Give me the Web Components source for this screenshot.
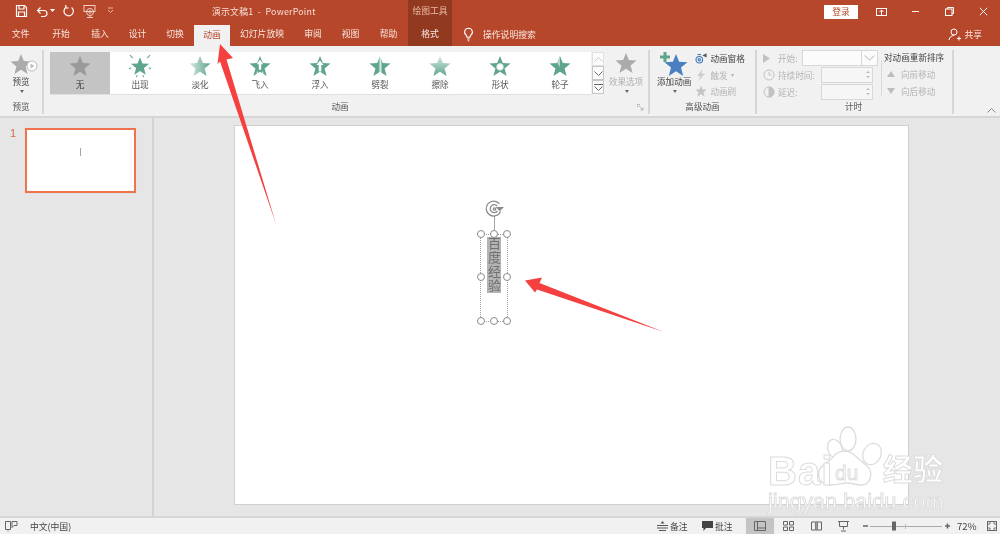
<!DOCTYPE html>
<html lang="zh-CN"><head><meta charset="utf-8"><title>PowerPoint</title>
<style>
html,body{margin:0;padding:0;width:1000px;height:534px;overflow:hidden;background:#e6e6e6}
body{font:8.8px "Noto Sans CJK SC","Liberation Sans",sans-serif;color:#444}
</style></head><body>
<ppt-app>
  <ppt-titlebar></ppt-titlebar>
  <ppt-tabs>
    <ppt-tab w="41">文件</ppt-tab><ppt-tab w="40">开始</ppt-tab><ppt-tab w="38">插入</ppt-tab><ppt-tab w="37">设计</ppt-tab><ppt-tab w="38">切换</ppt-tab>
    <ppt-tab w="36" active>动画</ppt-tab><ppt-tab w="64">幻灯片放映</ppt-tab><ppt-tab w="38">审阅</ppt-tab><ppt-tab w="37">视图</ppt-tab><ppt-tab w="39">帮助</ppt-tab><ppt-tab w="44" ctx>格式</ppt-tab>
  </ppt-tabs>
  <ppt-ribbon></ppt-ribbon>
  <ppt-main></ppt-main>
  <ppt-status></ppt-status>
  <ppt-watermark></ppt-watermark>
  <ppt-arrows></ppt-arrows>
</ppt-app>
<script>
const P="12,1 15.1,8.8 23.5,9.2 17,14.6 19.2,23 12,18.3 4.8,23 7,14.6 .5,9.2 8.9,8.8";
const G="#5fa48d";
function star(kind,s=22){
  let defs="",fill=G,extra="";
  if(kind==="none")fill="#9a9a9a";
  if(kind==="gray")fill="#ababab";
  if(kind==="blue")fill="#4a7fc0";
  if(kind==="fade"){defs=`<linearGradient id="g" x1="0" x2="1" y1="0" y2="0"><stop offset="0" stop-color="#d5e8e1"/><stop offset="1" stop-color="${G}"/></linearGradient>`;fill="url(#g)"}
  if(kind==="split"){defs=`<linearGradient id="g" x1="0" x2="1" y1="0" y2="0"><stop offset="0" stop-color="${G}"/><stop offset=".42" stop-color="${G}"/><stop offset=".52" stop-color="#d8ebe4"/><stop offset=".62" stop-color="${G}"/><stop offset="1" stop-color="${G}"/></linearGradient>`;fill="url(#g)"}
  if(kind==="wipe"){defs=`<linearGradient id="g" x1="0" x2="0" y1="0" y2="1"><stop offset="0" stop-color="#d5e8e1"/><stop offset="1" stop-color="${G}"/></linearGradient>`;fill="url(#g)"}
  if(kind==="appear")extra=`<g stroke="${G}" stroke-width="1.2" fill="none"><path d="M1 0l3 3.500M23 0l-3 3.500M0 15l2.500-1M24 15l-2.500-1M8 24l1-2M16 24l-1-2"/></g>`;
  if(kind==="fly")extra=`<path d="M12 5l-3.500 5h2.200v6h2.600v-6h2.200z" fill="#fff"/><path d="M9 18v4M12 19v4M15 18v4" stroke="#fff" stroke-width="1"/>`;
  if(kind==="float")extra=`<path d="M12 6l-4 5h2.600v7h2.800v-7h2.600z" fill="#fff"/>`;
  if(kind==="shape")extra=`<circle cx="12" cy="13" r="3.600" fill="#fff" stroke="#cfe4dc"/>`;
  if(kind==="wheel")extra=`<path d="M12 13L12 1L8.900 8.800z" fill="#b9d9cd"/>`;
  const t=kind==="appear"?"translate(1.700 1.700) scale(.86)":"";
  return `<svg width="${s}" height="${s}" viewBox="0 0 24 24" style="display:block;overflow:visible"><defs>${defs}</defs><g transform="${t}"><polygon points="${P}" fill="${fill}"/>${kind==="appear"?"":extra}</g>${kind==="appear"?extra:""}</svg>`;
}
function def(name,css,html,init){
  customElements.define(name,class extends HTMLElement{
    connectedCallback(){
      if(this.shadowRoot)return;
      const r=this.attachShadow({mode:"open"});
      r.innerHTML=`<style>${css}</style>`+(typeof html==="function"?html(this):html);
      init&&init(this,r);
    }
  });
}
def("ppt-app",`:host{position:relative;display:grid;grid-template-rows:23px 23px 72px 398px 18px;width:1000px;height:534px;overflow:hidden;filter:blur(.35px)}`,`<slot></slot>`);

const ico=`fill="none" stroke="#fff" stroke-width="1.2"`;
def("ppt-titlebar",`
:host{display:flex;background:#b7472a;color:#f6dfd8;height:23px;align-items:center;font-size:8.8px}
.qat{width:212px;display:flex;align-items:center;position:relative;height:23px;flex:none}
.qat svg{position:absolute;top:4px}
.title{width:196px;flex:none;letter-spacing:.25px;white-space:pre}
.ctx{width:44px;flex:none;height:23px;background:#923a20;color:#ecb9a8;text-align:center;line-height:21px}
.sp{flex:1}
.login{width:34px;height:14px;background:#fff;color:#b7472a;text-align:center;line-height:14px;flex:none;margin-right:6px;font-size:8.8px}
.win{display:flex;align-items:center;flex:none;width:136px}
.win span{width:34px;display:flex;justify-content:center}
`,`<div class="qat">
<svg style="left:15px" width="13" height="14" viewBox="0 0 13 14" ${ico}><path d="M1.500 1.500h8l2 2v9h-10z"/><path d="M4 1.500v3.500h5V1.500M3.500 12.500V8h6v4.500"/></svg>
<svg style="left:36px" width="12" height="14" viewBox="0 0 12 14" ${ico} stroke-width="1.4"><path d="M2 6.500h6a3 3 0 0 1 0 6H5M4.500 3.500L1.500 6.500l3 3"/></svg>
<svg style="left:50px;top:9px" width="5" height="4" viewBox="0 0 5 4"><path d="M0 0h5L2.500 3z" fill="#fff"/></svg>
<svg style="left:62px" width="13" height="14" viewBox="0 0 13 14" ${ico} stroke-width="1.4"><path d="M3.400 3.500a4.700 4.700 0 1 0 5.600-.2M9.200 1v3H6.300" transform="scale(-1 1) translate(-13 0)"/></svg>
<svg style="left:83px" width="14" height="15" viewBox="0 0 14 15" fill="none" stroke="#f0d0c6" stroke-width="1"><rect x="1" y="1.500" width="11" height="6"/><circle cx="7" cy="8" r="3.500"/><circle cx="7" cy="8" r="1.200"/><path d="M4 13.500h6M7 11.500v2"/></svg>
<svg style="left:107px;top:7px" width="7" height="7" viewBox="0 0 7 7" fill="none" stroke="#e8b5a6"><path d="M1 1h5M1 3l2.500 2.500L6 3"/></svg>
</div>
<div class="title">演示文稿1  -  PowerPoint</div>
<div class="ctx">绘图工具</div><div class="sp"></div>
<div class="login">登录</div>
<div class="win">
<span><svg width="11" height="10" viewBox="0 0 11 10" fill="none" stroke="#fff"><rect x=".5" y="1.500" width="10" height="7"/><path d="M5.500 8V3M3.500 5l2-2 2 2" /></svg></span>
<span><svg width="9" height="9" viewBox="0 0 9 9" stroke="#fff"><path d="M1 4.500h7"/></svg></span>
<span><svg width="9" height="9" viewBox="0 0 9 9" fill="none" stroke="#fff"><rect x=".5" y="2" width="6.500" height="6.500"/><path d="M2.500 2V.5h6v6H7"/></svg></span>
<span><svg width="9" height="9" viewBox="0 0 9 9" stroke="#fff"><path d="M.8.8l7.400 7.400M8.200.8L.8 8.200"/></svg></span>
</div>`);

def("ppt-tabs",`
:host{display:flex;background:#b7472a;color:#f8e6e0;height:23px;align-items:flex-end}
.s{display:flex;align-items:center;height:23px;margin-left:11px;gap:9px;flex:1;font-size:8.8px}
.share{display:flex;align-items:center;gap:3px;margin-right:18px;margin-left:auto;font-size:8.8px}
`,`<slot></slot><div class="s"><svg width="11" height="15" viewBox="0 0 11 15" fill="none" stroke="#fff" stroke-width="1.1"><path d="M5.500 1.200a3.900 3.900 0 0 0-2.200 7.100c.5.500.7 1 .7 2h3c0-1 .2-1.500.7-2a3.900 3.900 0 0 0-2.200-7.100zM4.200 12h2.600M4.700 13.800h1.600"/></svg><span>操作说明搜索</span>
<span class="share"><svg width="13" height="13" viewBox="0 0 13 13" fill="none" stroke="#fff"><circle cx="6" cy="4" r="3"/><path d="M1 12c.5-3 2.500-4.500 5-4.500M9 10.500h4M11 8.500v4"/></svg>共享</span></div>`);
def("ppt-tab",`
:host{display:flex;align-items:center;justify-content:center;flex:none;padding-bottom:2px;box-sizing:border-box;height:23px;color:#f8e6e0}
:host([active]){background:#f1f1f1;color:#b7472a;height:21px}
:host([ctx]){background:#923a20}
`,`<slot></slot>`,h=>{h.style.width=h.getAttribute("w")+"px"});

def("ppt-group",`
:host{display:flex;flex-direction:column;height:64px;border-right:2px solid #d6d6d6;box-sizing:border-box;flex:none;position:relative}
.c{flex:1;min-height:0;display:flex}
.l{height:14px;line-height:14px;text-align:center;color:#555;font-size:8.6px;margin-bottom:1px;padding-right:var(--lp,0)}
`,h=>`<div class="c"><slot></slot></div><div class="l">${h.getAttribute("label")}</div>`,h=>{h.style.width=h.getAttribute("w")+"px"});

def("ppt-effect",`
:host{display:flex;flex-direction:column;align-items:center;width:60px;height:42px;flex:none;padding-top:3px;box-sizing:border-box;color:#555;font-size:8.6px;line-height:12px}
:host([sel]){background:#c4c4c4;color:#333}
svg{margin-bottom:1px}
`,h=>star(h.getAttribute("k"))+`<slot></slot>`);

def("ppt-big",`
:host{display:flex;flex-direction:column;align-items:center;font-size:8.6px;line-height:11px;color:var(--c,#444);flex:none}
.i{height:24px;position:relative}
.d{font-size:6px;line-height:8px;color:#666;transform:scaleX(1.3)}
`,h=>`<div class="i"><slot name="i"></slot></div><slot></slot><div class="d">▾</div>`);

def("ppt-row",`
:host{display:flex;align-items:center;height:17px;color:var(--c,#b4b4b4);font-size:8.6px;white-space:nowrap;gap:3px;flex:none}
.i{width:var(--iw,14px);display:flex;justify-content:center;flex:none}
`,`<span class="i"><slot name="i"></slot></span><slot></slot>`);

def("ppt-field",`
:host{display:flex;box-sizing:border-box;height:16px;border:1px solid #d8d8d8;background:#f6f6f6;margin-left:auto;flex:none;justify-content:flex-end}
.b{width:8px;display:flex;flex-direction:column;align-items:center;justify-content:center;gap:3px}
.b i{display:block;border:2px solid transparent}
.t{border-bottom-color:#bbb!important;border-top:0!important}
.u{border-top-color:#bbb!important;border-bottom:0!important}
.dd{width:15px;border-left:1px solid #d8d8d8;display:flex;align-items:center;justify-content:center}
`,h=>h.hasAttribute("dd")?`<div class="dd"><svg width="11" height="6" viewBox="0 0 11 6" fill="none" stroke="#b5b5b5"><path d="M.5.500l5 4.500 5-4.500"/></svg></div>`:`<div class="b"><i class="t"></i><i class="u"></i></div>`,h=>{h.style.width=h.getAttribute("w")+"px"});

def("ppt-ribbon",`
:host{display:block;height:72px;background:#f1f1f1;border-bottom:2px solid #d6d6d6;box-sizing:border-box}
.r{display:flex;padding-top:4px}
.prev{width:100%;display:flex;justify-content:center;padding-top:2px;box-sizing:border-box}
.anim{display:flex;padding:2px 0 0 6px;align-items:flex-start}
.gal{display:flex;width:541px;height:43px;background:#fff;box-sizing:border-box;border-bottom:1px solid #e0e0e0;padding-right:1px}
.sc{display:flex;flex-direction:column;width:12px;margin-left:1px;height:42px}
.sc div{height:14px;box-sizing:border-box;border:1px solid #c6c6c6;display:flex;align-items:center;justify-content:center;background:#fbfbfb}
.sc div:first-child{border-color:#e2e2e2}
.opt{margin-left:1px;width:42px;--c:#b0b0b0}
.adv{display:flex;padding:2px 0 0 7px}
.add{--c:#444;margin-right:4px}
.advc{display:flex;flex-direction:column;color:#444;font-size:8.6px;margin-top:-2px}
.advc ppt-row{--iw:12px;height:16.500px}
.tim{display:flex;padding-top:0}
.tl{width:121px;margin-right:1px;display:flex;flex-direction:column}
.vr{width:1px;height:36px;background:#d8d8d8;margin:10px 2px 0 2px;flex:none}
.tr{font-size:8.6px;display:flex;flex-direction:column;width:66px}
.tr b{font-weight:400;color:#444;height:16px;line-height:15px;white-space:nowrap}
.chev{margin:58px 0 0 33px}
.clk{margin-left:6px}
`,`<div class="r">
<ppt-group w="44" label="预览"><div class="prev"><ppt-big><span slot="i" style="display:block;position:relative;width:30px;height:24px"><span style="position:absolute;left:4px;top:1px">${star("gray",22)}</span><svg style="position:absolute;left:20px;top:8px" width="12" height="12" viewBox="0 0 12 12"><circle cx="6" cy="6" r="5" fill="#fff" stroke="#bbb"/><path d="M4.500 3.500l4 2.500-4 2.500z" fill="#bbb"/></svg></span>预览</ppt-big></div></ppt-group>
<ppt-group w="606" label="动画" style="--lp:12px"><div class="anim">
<div class="gal">
<ppt-effect k="none" sel>无</ppt-effect><ppt-effect k="appear">出现</ppt-effect><ppt-effect k="fade">淡化</ppt-effect><ppt-effect k="fly">飞入</ppt-effect><ppt-effect k="float">浮入</ppt-effect><ppt-effect k="split">劈裂</ppt-effect><ppt-effect k="wipe">擦除</ppt-effect><ppt-effect k="shape">形状</ppt-effect><ppt-effect k="wheel">轮子</ppt-effect>
</div>
<div class="sc"><div><svg width="9" height="5" viewBox="0 0 9 5" fill="none" stroke="#ccc"><path d="M.5 4.500l4-4 4 4"/></svg></div><div><svg width="9" height="5" viewBox="0 0 9 5" fill="none" stroke="#666"><path d="M.5.500l4 4 4-4"/></svg></div><div style="flex-direction:column;gap:1px"><svg width="9" height="1" style="display:block"><path d="M0 .5h9" stroke="#666"/></svg><svg width="9" height="5" viewBox="0 0 9 5" fill="none" stroke="#666"><path d="M.5.500l4 4 4-4"/></svg></div></div>
<div class="opt"><ppt-big><span slot="i" style="display:block">${star("gray",22)}</span>效果选项</ppt-big></div>
<svg style="position:absolute;right:4px;bottom:3px" width="7" height="7" viewBox="0 0 7 7" fill="none" stroke="#aaa" stroke-width=".8"><path d="M.5 3V.5H3M2 2l4 4M6 3.500V6H3.500"/></svg>
</div></ppt-group>
<ppt-group w="107" label="高级动画"><div class="adv">
<ppt-big class="add"><span slot="i" style="display:block;position:relative;width:30px;height:24px"><span style="position:absolute;left:5px;top:1px">${star("blue",24)}</span><svg style="position:absolute;left:1px;top:0" width="10" height="10" viewBox="0 0 10 10"><path d="M3.500 0h3v3.500H10v3H6.500V10h-3V6.500H0v-3h3.500z" fill="#5fa48d"/></svg></span>添加动画</ppt-big>
<div class="advc">
<ppt-row style="--c:#444"><svg slot="i" width="14" height="14" viewBox="0 0 14 14" fill="none" stroke="#3f78b8" stroke-width="1.300"><circle cx="5" cy="9" r="3.800"/><circle cx="5" cy="9" r="1.300"/><path d="M3 3h4" /><path d="M8.500 4l5-2.500v5z" fill="#555" stroke="none"/></svg>动画窗格</ppt-row>
<ppt-row><svg slot="i" width="10" height="12" viewBox="0 0 10 12"><path d="M6.500 0L1 7h3L2.500 12 9 4.500H5.500z" fill="#cfcfcf"/></svg>触发 <span style="font-size:6px">▾</span></ppt-row>
<ppt-row><span slot="i" style="display:block">${star("gray",12).replace("#ababab","#c4c4c4")}</span>动画刷</ppt-row>
</div></div></ppt-group>
<ppt-group w="197" label="计时" style="--lp:2px"><div class="tim">
<div class="tl">
<ppt-row style="height:16px;--iw:18px;gap:3px"><svg slot="i" width="9" height="11" viewBox="0 0 9 11"><path d="M1 1l7 4.500-7 4.500z" fill="#c2c2c2"/></svg>开始:<ppt-field w="76" dd style="background:#fbfbfb"></ppt-field></ppt-row>
<ppt-row style="--iw:18px;gap:3px;padding-right:5px"><svg class="clk" slot="i" width="12" height="12" viewBox="0 0 12 12" fill="none" stroke="#c2c2c2"><circle cx="6" cy="6" r="5"/><path d="M6 3v3h2.500"/></svg>持续时间:<ppt-field w="52"></ppt-field></ppt-row>
<ppt-row style="--iw:18px;gap:3px;padding-right:5px"><svg class="clk" slot="i" width="12" height="12" viewBox="0 0 12 12" fill="none" stroke="#c2c2c2"><circle cx="6" cy="6" r="5"/><path d="M6 6V1a5 5 0 0 1 0 10z" fill="#c2c2c2"/></svg>延迟:<ppt-field w="52"></ppt-field></ppt-row>
</div>
<div class="vr"></div>
<div class="tr"><b>对动画重新排序</b>
<ppt-row style="--iw:12px;gap:4px;padding-left:1px"><svg slot="i" width="8" height="6" viewBox="0 0 8 6"><path d="M4 0l4 6H0z" fill="#bdbdbd"/></svg>向前移动</ppt-row>
<ppt-row style="--iw:12px;gap:4px;padding-left:1px"><svg slot="i" width="8" height="6" viewBox="0 0 8 6"><path d="M4 6l4-6H0z" fill="#bdbdbd"/></svg>向后移动</ppt-row>
</div></div></ppt-group>
<svg class="chev" width="9" height="5" viewBox="0 0 9 5" fill="none" stroke="#888"><path d="M.5 4.500l4-4 4 4"/></svg>
</div>`);

def("ppt-main",`
:host{display:flex;height:398px;background:#e6e6e6}
.th{flex:none;border-right:2px solid #d2d2d2;display:flex;padding:10px 0 0 10px;box-sizing:border-box;width:154px}
.n{color:#d8684a;font-size:11px;line-height:11px;width:15px;font-family:"Liberation Sans",sans-serif}
.thumb{width:111px;height:65px;background:#fff;border:2px solid #f0734e;box-sizing:border-box;display:flex;justify-content:center;align-items:flex-start;padding-top:18px;box-shadow:0 0 1px #ddd}
.thumb i{display:block;width:1.500px;height:8px;background:#a5a5a5}
.cv{flex:1;padding:7px 0 0 80px}
`,`<div class="th"><div class="n">1</div><div class="thumb"><i></i></div></div><div class="cv"><ppt-slide></ppt-slide></div>`);

def("ppt-slide",`
:host{display:block;position:relative;width:675px;height:380px;background:#fff;box-sizing:border-box;border:1px solid #d0d0d0}
.box{position:absolute;left:245px;top:108px;width:28px;height:87px;border-left:1px dotted #a0a0a0;border-right:1px dotted #a0a0a0;box-sizing:border-box}
.txt{position:absolute;left:252px;top:111px;width:14px;height:56px;background:#b4b4b4;color:#707070;font-size:13px;line-height:14px;letter-spacing:1px;writing-mode:vertical-rl;text-orientation:upright;font-family:"Noto Sans CJK SC",sans-serif;white-space:nowrap}
.h{position:absolute;width:6px;height:6px;border:1.300px solid #8b8b8b;border-radius:50%;background:#fff;box-sizing:content-box;margin:-4px 0 0 -4px}
.dots{position:absolute;left:246px;top:108px;width:26px;border-top:1px dotted #a0a0a0}
.line{position:absolute;left:259px;top:90px;width:1px;height:18px;background:#a5a5a5}
.rot{position:absolute;left:250px;top:74px}
`,`<div class="dots"></div><div class="dots" style="top:195px"></div><div class="box"></div><div class="txt">百度经验</div><div class="line"></div>
<svg class="rot" width="20" height="18" viewBox="0 0 20 18" fill="none" stroke="#8b8b8b" stroke-width="1.300"><path d="M15.600 11.500A7.500 7.500 0 1 1 14.500 3.800"/><path d="M12.500 11a4 4 0 1 1-.3-5"/><circle cx="9.500" cy="9" r="1.200"/><path d="M10.500 7h8.500l-4.200 4.200z" fill="#8b8b8b" stroke="none"/></svg>
<i class="h" style="left:246px;top:108px"></i><i class="h" style="left:259px;top:108px"></i><i class="h" style="left:272px;top:108px"></i>
<i class="h" style="left:246px;top:151px"></i><i class="h" style="left:272px;top:151px"></i>
<i class="h" style="left:246px;top:195px"></i><i class="h" style="left:259px;top:195px"></i><i class="h" style="left:272px;top:195px"></i>`);

def("ppt-status",`
:host{display:flex;align-items:center;height:18px;background:#f1f1f1;border-top:2px solid #d6d6d6;box-sizing:border-box;font-size:8.800px;color:#444;position:relative}
.l{display:flex;align-items:center;margin-left:5px;gap:12px;width:652px;flex:none}
.n{display:flex;align-items:center;gap:2px;flex:none}
.v{display:flex;height:16px;align-items:center;justify-content:center;flex:none;width:28px}
.on{background:#c4c4c4}
.z{display:flex;align-items:center;flex:none}
`,`<div class="l"><svg width="13" height="11" viewBox="0 0 13 11" fill="none" stroke="#666"><path d="M.5.500h5v8h-5zM7 .5h5v4H9l-2 2zM3 9.500v1"/></svg><span>中文(中国)</span></div>
<div class="n" style="width:45px"><svg width="11" height="10" viewBox="0 0 11 10" fill="#555"><path d="M5.500 0l2 2.500h-4zM0 4h11v1H0zM0 6.500h11v1H0zM2 9h7v1H2z"/></svg>备注</div>
<div class="n" style="width:44px"><svg width="11" height="10" viewBox="0 0 11 10"><path d="M0 0h11v7H4L1.500 10V7H0z" fill="#444"/></svg>批注</div>
<div class="v on"><svg width="12" height="10" viewBox="0 0 12 10" fill="none" stroke="#666"><path d="M.5.500h11v9H.5zM3.500.500v9M3.500 7h8"/></svg></div>
<div class="v"><svg width="11" height="10" viewBox="0 0 11 10" fill="none" stroke="#666"><path d="M.5.500h4v3.500h-4zM6.500.500h4v3.500h-4zM.5 6h4v3.500h-4zM6.500 6h4v3.500h-4z"/></svg></div>
<div class="v"><svg width="11" height="10" viewBox="0 0 11 10" fill="none" stroke="#666"><path d="M.5 1h4v8h-4zM6.500 1h4v8h-4z"/><path d="M4.500 0h2v10h-2z" fill="#999" stroke="none"/></svg></div>
<div class="v" style="width:18px;margin-left:4px"><svg width="11" height="11" viewBox="0 0 11 11" fill="none" stroke="#666"><path d="M0 .5h11M1.500.500v5h8v-5M5.500 5.500v3M3 10h5"/></svg></div>
<div class="z" style="margin-left:3px;width:142px;height:14px">
<svg width="96" height="14" viewBox="0 0 96 14" style="flex:none"><path d="M8 7h5M90 7h5M92.500 4.500v5" stroke="#666" stroke-width="1.500"/><path d="M15 7.500h72" stroke="#aaa"/><rect x="37" y="2.500" width="4" height="9" fill="#666"/><path d="M50.500 5v5" stroke="#bbb"/></svg>
<span style="margin-left:6px;font-size:9.600px">72%</span>
<svg style="margin-left:10px;flex:none" width="10" height="10" viewBox="0 0 10 10" fill="none" stroke="#666"><rect x=".5" y=".5" width="9" height="9"/><path d="M2 4V2h2M8 4V2H6M2 6v2h2M8 6v2H6" stroke-width=".9"/></svg>
</div>`);

def("ppt-watermark",`
:host{position:absolute;left:765px;top:425px;width:185px;height:90px;display:block;color:#fff;pointer-events:none}
span{position:absolute;-webkit-text-stroke:1px #dcdcdc;white-space:nowrap}
.b{left:3px;top:28px;font:700 40px/36px "Liberation Sans",sans-serif;letter-spacing:1px}
.d{left:70px;top:37px;font:400 21px/21px "Liberation Sans",sans-serif}
.c{left:118px;top:26px;font:700 30px/32px "Noto Sans CJK SC",sans-serif}
.u{left:3px;top:65px;font:400 21.800px/24px "Liberation Sans",sans-serif}
svg{position:absolute;left:0;top:0}
`,`<svg width="185" height="70" viewBox="0 0 185 70" fill="#fff" stroke="#dcdcdc" stroke-width="1.300"><ellipse cx="83" cy="14" rx="8" ry="12"/><ellipse cx="70" cy="24" rx="7" ry="10" transform="rotate(-20 70 24)"/><ellipse cx="107" cy="29" rx="9" ry="11" transform="rotate(25 107 29)"/><path d="M66 60c-9 0-14-6-12-14 2-7 10-8 14-14 4-6 14-8 20-3 5 4 9 8 14 12 6 5 5 19-6 19-6 0-8-2-14-2s-8 2-16 2z"/></svg>
<span class="b">Bai</span><span class="d">du</span><span class="c">经验</span><span class="u">jingyan.baidu.com</span>`);

def("ppt-arrows",`:host{position:absolute;left:0;top:0;width:1000px;height:534px;display:block;pointer-events:none}svg{display:block}`,
`<svg width="1000" height="534" viewBox="0 0 1000 534"><polygon points="220,44 233,58 226.500,59.500 276,224 220,61.500 217.500,64" fill="#f4413f"/><polygon points="525,280.500 542,277.500 539.500,283 664,332 537,289.500 535,292.500" fill="#f4413f"/></svg>`);
</script>
</body></html>
